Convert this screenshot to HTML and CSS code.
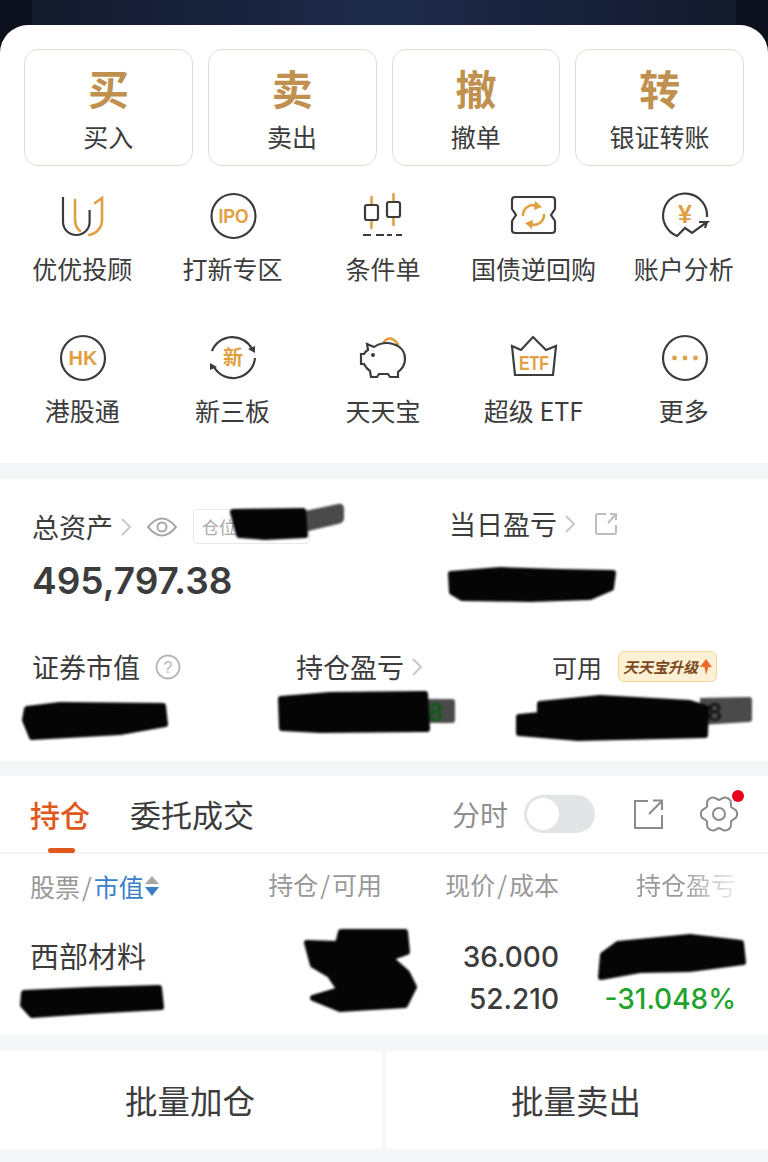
FILE: index.html

```html
<html>
<head>
  <title>交易</title>
  <link rel="stylesheet" href="styles.css">
</head>
<body>
  <div class="page">
    <div class="top-bg"><div class="top-panel"></div></div>

    <div class="sheet">
      <div class="actions">
        <div class="action"><span class="action-big">买</span><span class="action-label">买入</span></div>
        <div class="action"><span class="action-big">卖</span><span class="action-label">卖出</span></div>
        <div class="action"><span class="action-big">撤</span><span class="action-label">撤单</span></div>
        <div class="action"><span class="action-big">转</span><span class="action-label">银证转账</span></div>
      </div>

      <div class="menu">
        <div class="menu-item">
          <svg class="icon" viewBox="0 0 48 48">
            <path class="dark" d="M5 5V30a13.3 13 0 0 0 26.6 0V18"/>
            <path class="gold" d="M17 8V27q0 8 5 12"/>
            <path class="gold" d="M37 11L44 6V28a15 15 0 0 1-13 15"/>
          </svg>
          <span>优优投顾</span>
        </div>
        <div class="menu-item">
          <svg class="icon" viewBox="0 0 48 48">
            <circle class="dark" cx="24.5" cy="24" r="22"/>
            <text class="icon-text" x="24.5" y="31" font-size="20" textLength="30" lengthAdjust="spacingAndGlyphs">IPO</text>
          </svg>
          <span>打新专区</span>
        </div>
        <div class="menu-item">
          <svg class="icon" viewBox="0 0 48 48">
            <path class="gold" d="M12.5 5V13M12.5 28V36M34.5 2V10M34.5 25V33"/>
            <rect class="dark" x="6" y="13" width="13" height="15" rx="2"/>
            <rect class="dark" x="28" y="10" width="13" height="15" rx="2"/>
            <path class="dark" d="M4 43H12M17 43H25M28 43H33M37 43H43"/>
          </svg>
          <span>条件单</span>
        </div>
        <div class="menu-item">
          <svg class="icon" viewBox="0 0 48 48">
            <path class="dark" d="M6 5H43a3 3 0 0 1 3 3v9l-4 6 4 6v9a3 3 0 0 1-3 3H6a3 3 0 0 1-3-3v-9l4-6-4-6V8a3 3 0 0 1 3-3z"/>
            <path class="gold" d="M14 23a10 10 0 0 1 14-9M35 23a10 10 0 0 1-14 9"/>
            <path class="gold-fill" d="M26 9l7 6-8 3zM23 37l-7-6 8-3z"/>
          </svg>
          <span>国债逆回购</span>
        </div>
        <div class="menu-item">
          <svg class="icon" viewBox="0 0 48 48">
            <path class="dark" d="M47 25A22 22 0 1 0 17 44L25 36L32 41L47 30H39M47 30L45 36"/>
            <text class="icon-text" x="25" y="31" font-size="25">¥</text>
          </svg>
          <span>账户分析</span>
        </div>

        <div class="menu-item">
          <svg class="icon" viewBox="0 0 48 48">
            <circle class="dark" cx="25" cy="24" r="22"/>
            <text class="icon-text" x="25" y="31" font-size="20">HK</text>
          </svg>
          <span>港股通</span>
        </div>
        <div class="menu-item">
          <svg class="icon" viewBox="0 0 48 48">
            <path class="dark" d="M3 17A22 22 0 0 1 43 15M46 24A22 22 0 0 1 5 33"/>
            <path class="dark-fill" d="M39 15l7-3 0 7zM8 33l-7 3 0-7z"/>
            <text class="icon-text" x="24" y="31" font-size="20">新</text>
          </svg>
          <span>新三板</span>
        </div>
        <div class="menu-item">
          <svg class="icon" viewBox="0 0 48 48">
            <path class="gold" d="M25 8Q31 0 39 10"/>
            <path class="dark" d="M8 10L15 13C20 9 28 8 34 10C42 12 46 18 46 25C46 31 43 35 39 38V43H31L29 40H20L18 43H12L11 37C8 35 6 32 5 30H2V20H5C6 18 7 17 9 16Z"/>
            <circle class="dark-fill" cx="14" cy="21" r="2"/>
          </svg>
          <span>天天宝</span>
        </div>
        <div class="menu-item">
          <svg class="icon" viewBox="0 0 48 48">
            <path class="dark" d="M3 12L12 16L24 3L37 16L47 12L44 41H6Z"/>
            <text class="icon-text" x="25" y="36" font-size="20" textLength="30" lengthAdjust="spacingAndGlyphs">ETF</text>
          </svg>
          <span>超级 ETF</span>
        </div>
        <div class="menu-item">
          <svg class="icon" viewBox="0 0 48 48">
            <circle class="dark" cx="25" cy="24" r="22"/>
            <circle class="gold-fill" cx="14.500" cy="24" r="2.4"/>
            <circle class="gold-fill" cx="25" cy="24" r="2.4"/>
            <circle class="gold-fill" cx="35.500" cy="24" r="2.4"/>
          </svg>
          <span>更多</span>
        </div>
      </div>
    </div>

    <div class="assets">
      <div class="assets-top">
        <div class="asset-total">
          <div class="label">
            <span>总资产</span>
            <svg class="chevron" viewBox="0 0 12 20"><path d="M2 2L10 10L2 18"/></svg>
            <svg class="eye" viewBox="0 0 30 20"><path d="M1 10Q15 -7 29 10Q15 27 1 10Z"/><circle cx="15" cy="10" r="4.5"/></svg>
            <span class="position-tag">仓位</span>
          </div>
          <div class="total-value">495,797.38</div>
        </div>
        <div class="asset-today">
          <div class="label">
            <span>当日盈亏</span>
            <svg class="chevron" viewBox="0 0 12 20"><path d="M2 2L10 10L2 18"/></svg>
            <svg class="share-small" viewBox="0 0 24 24"><path d="M12 2H4a2 2 0 0 0-2 2V20a2 2 0 0 0 2 2H20a2 2 0 0 0 2-2V13M14 11L22 2M16 2H22V8"/></svg>
          </div>
        </div>
      </div>
      <div class="assets-bottom">
        <div class="label label-market">
          <span>证券市值</span>
          <svg class="help" viewBox="0 0 26 26"><circle cx="13" cy="13" r="11.5"/><text x="13" y="19" font-size="16">?</text></svg>
        </div>
        <div class="label label-hold">
          <span>持仓盈亏</span>
          <svg class="chevron" viewBox="0 0 12 20"><path d="M2 2L10 10L2 18"/></svg>
        </div>
        <div class="label label-free">
          <span>可用</span>
          <span class="upgrade">天天宝升级<svg class="upgrade-arrow" viewBox="0 0 12 16"><path d="M6 0L12 8H8.500L6 16L4.500 8H0Z"/></svg></span>
        </div>
      </div>
    </div>

    <div class="holdings">
      <div class="tabs">
        <span class="tab tab-active">持仓</span>
        <span class="tab">委托成交</span>
        <div class="tab-tools">
          <span class="tool-label">分时</span>
          <span class="switch"><span class="knob"></span></span>
          <svg class="share" viewBox="0 0 30 30"><path d="M15 2H2V29H29V16M16 15L29 2M20 1.500H29V11"/></svg>
          <span class="gear-box">
            <svg class="gear" viewBox="-1 0 38 36">
              <path d="M30.100 11L35.100 14.400Q37 18 35.100 21.600L30.100 25L29.700 31Q27.500 34.500 23.400 34.600L18 32L12.600 34.600Q8.500 34.500 6.300 31L5.900 25L.9 21.600Q-1 18 .9 14.400L5.900 11L6.300 5Q8.500 1.500 12.600 1.400L18 4L23.400 1.400Q27.500 1.500 29.700 5Z"/>
              <circle cx="18" cy="18" r="6"/>
            </svg>
            <span class="red-dot"></span>
          </span>
        </div>
      </div>

      <div class="table-head">
        <div class="head-name">股票<span class="slash">/</span><span class="blue">市值</span><svg class="sort" viewBox="0 0 14 20"><path class="sort-up" d="M7 0L14 8H0Z"/><path class="sort-down" d="M0 11H14L7 20Z"/></svg></div>
        <div>持仓<span class="slash">/</span>可用</div>
        <div>现价<span class="slash">/</span>成本</div>
        <div class="fade">持仓盈亏</div>
      </div>

      <div class="table-row">
        <div class="stock-name">西部材料</div>
        <div></div>
        <div class="num">36.000</div>
        <div></div>
        <div></div>
        <div></div>
        <div class="num">52.210</div>
        <div class="num green">-31.048%</div>
      </div>
    </div>

    <div class="batch">
      <div class="batch-btn">批量加仓</div>
      <div class="batch-btn">批量卖出</div>
    </div>

    <!-- scribbled out parts of the screenshot -->
    <svg class="scribbles" viewBox="0 0 768 1162">
      <path class="tail" d="M300 512L338 504Q344 503 344 509V518Q344 523 338 524L300 533Z"/>
      <path class="tail" d="M425 699H452Q455 699 455 702V720Q455 723 452 723H425Z"/>
      <path class="tail" d="M700 698L749 697Q752 697 752 700V719Q752 722 749 722L700 725Z"/>
      <text class="hint hint-green" x="428" y="721" font-size="24">8</text>
      <text class="hint" x="707" y="721" font-size="24">8</text>
      <path d="M233 512L303 511L305 535L265 537L239 535Z"/>
      <path d="M451 574L500 570L560 572L613 573L611 588L590 597L530 599L462 598L452 592Z"/>
      <path d="M27 709L60 705L163 706L165 724L120 732L32 737L25 720Z"/>
      <path d="M281 699L330 695L425 694L427 729L320 730L282 728Z"/>
      <path d="M540 704L600 698L690 703L706 708L705 735L578 738L519 733L519 717L540 715Z"/>
      <path d="M24 993L90 990L159 988L161 1007L90 1011L32 1015L23 1005Z"/>
      <path d="M307 943L338 944L341 932L405 932L407 952L390 958L407 973L414 987L405 1005L340 1009L313 998L340 990L330 975L313 965Z"/>
      <path d="M603 955L618 944L690 937L741 943L743 962L690 969L640 970L601 977Z"/>
    </svg>
  </div>
</body>
</html>
```

FILE: styles.css

```css
body {
  margin: 0;
  background-color: #f4f6f8;
  font-family: "Noto Sans CJK SC", "Noto Sans", sans-serif;
  color: #3c3c3c;
}

svg {
  display: block;
  fill: none;
}

.page {
  position: relative;
  width: 768px;
  height: 1162px;
  overflow: hidden;
}

.top-bg {
  height: 53px;
  padding: 0 32px;
  background: #0c111d;
}

.top-panel {
  height: 100%;
  background: linear-gradient(90deg, #121a2b, #1e2a4b 50%, #121a2b);
}

.sheet {
  position: relative;
  margin-top: -28px;
  padding: 24px 0 38px;
  background-color: #fff;
  border-radius: 28px 28px 0 0;
}

.actions {
  display: flex;
  gap: 15px;
  padding: 0 24px;
}

.action {
  flex: 1;
  height: 117px;
  box-sizing: border-box;
  display: flex;
  flex-direction: column;
  align-items: center;
  border: 1px solid #e5dcd6;
  border-radius: 14px;
}

.action-big {
  margin-top: 8px;
  font-size: 41px;
  line-height: 58px;
  font-weight: 700;
  color: #c0904f;
}

.action-label {
  margin-top: 2px;
  font-size: 25px;
  line-height: 36px;
}

.menu {
  display: grid;
  grid-template-columns: repeat(5, 1fr);
  row-gap: 51px;
  margin-top: 26px;
  padding: 0 9px 0 7px;
}

.menu-item {
  display: flex;
  flex-direction: column;
  align-items: center;
  font-size: 25px;
  line-height: 30px;
}

.icon {
  width: 48px;
  height: 48px;
  margin-bottom: 13px;
  overflow: visible;
}

.dark {
  fill: none;
  stroke: #3c3c3c;
  stroke-width: 2.2;
}

.gold {
  fill: none;
  stroke: #e2a043;
  stroke-width: 2.6;
  stroke-linecap: round;
}

.gold-fill {
  fill: #e2a043;
}

.dark-fill {
  fill: #3c3c3c;
}

.icon-text {
  fill: #e2a043;
  font-family: "Liberation Sans", "Noto Sans CJK SC", sans-serif;
  font-weight: 700;
  text-anchor: middle;
}

.assets {
  height: 282px;
  margin-top: 16px;
  box-sizing: border-box;
  padding: 30px 0 0 32px;
  background-color: #fff;
}

.assets-top {
  display: grid;
  grid-template-columns: 417px 1fr;
}

.label {
  display: flex;
  align-items: center;
  font-size: 27px;
  line-height: 30px;
}

.chevron {
  width: 12px;
  height: 20px;
  margin-left: 7px;
  stroke: #c9c9c9;
  stroke-width: 2;
}

.eye {
  width: 30px;
  height: 20px;
  margin-left: 15px;
  stroke: #a8a8a8;
  stroke-width: 2;
}

.position-tag {
  margin-left: 16px;
  width: 117px;
  height: 35px;
  box-sizing: border-box;
  padding-left: 8px;
  border: 1px solid #e8e8e8;
  border-radius: 4px;
  font-size: 17px;
  line-height: 33px;
  color: #aaa;
}

.share-small {
  width: 24px;
  height: 24px;
  margin-left: 18px;
  stroke: #bdbdbd;
  stroke-width: 2;
}

.total-value {
  margin-top: 15px;
  font-family: Inter, "Liberation Sans", sans-serif;
  font-size: 37px;
  line-height: 44px;
  font-weight: 600;
}

.assets-bottom {
  display: grid;
  grid-template-columns: 264px 256px 1fr;
  margin-top: 48px;
}

.label-free {
  font-size: 25px;
}

.help {
  width: 26px;
  height: 26px;
  margin-left: 15px;
  stroke: #b5b5b5;
  stroke-width: 1.8;
}

.help text {
  fill: #b5b5b5;
  stroke: none;
  font-family: "Liberation Sans", sans-serif;
  text-anchor: middle;
}

.upgrade {
  display: flex;
  align-items: center;
  gap: 2px;
  margin-left: 16px;
  height: 31px;
  box-sizing: border-box;
  padding: 0 4px;
  background-color: #fdf0d5;
  border: 1px solid #f3d79a;
  border-radius: 6px;
  font-size: 15px;
  line-height: 29px;
  font-weight: 700;
  font-style: italic;
  color: #7a4a20;
}

.upgrade-arrow {
  width: 12px;
  height: 16px;
  fill: #ec6a2a;
}

.holdings {
  height: 259px;
  margin-top: 15px;
  background-color: #fff;
}

.tabs {
  display: flex;
  align-items: center;
  height: 78px;
  box-sizing: border-box;
  padding: 0 30px;
  border-bottom: 2px solid #f5f5f5;
}

.tab {
  position: relative;
  margin-right: 40px;
  font-size: 31px;
  line-height: 78px;
}

.tab-active {
  font-size: 30px;
  color: #e0591c;
  font-weight: 500;
}

.tab-active::after {
  content: "";
  position: absolute;
  left: 18px;
  bottom: 0;
  width: 27px;
  height: 5px;
  border-radius: 3px;
  background-color: #e0591c;
}

.tab-tools {
  display: flex;
  align-items: center;
  margin-left: auto;
}

.tool-label {
  font-size: 28px;
  color: #8f8f8f;
}

.switch {
  display: block;
  width: 71px;
  height: 38px;
  margin-left: 16px;
  padding: 3px;
  box-sizing: border-box;
  border-radius: 19px;
  background-color: #e2e4e6;
}

.knob {
  display: block;
  width: 32px;
  height: 32px;
  border-radius: 50%;
  background-color: #fff;
}

.share {
  width: 30px;
  height: 30px;
  margin-left: 38px;
  stroke: #8a8a8a;
  stroke-width: 2;
}

.gear-box {
  position: relative;
  margin-left: 37px;
}

.gear {
  width: 38px;
  height: 36px;
  stroke: #8a8a8a;
  stroke-width: 2;
  stroke-linejoin: round;
}

.red-dot {
  position: absolute;
  top: -6px;
  right: -6px;
  width: 12px;
  height: 12px;
  border-radius: 50%;
  background-color: #e8001c;
}

.table-head,
.table-row {
  display: grid;
  grid-template-columns: 175px 177px 177px 177px;
  padding-left: 30px;
  text-align: right;
}

.table-head {
  height: 63px;
  font-size: 25px;
  line-height: 60px;
  color: #999;
}

.slash {
  margin: 0 2px;
}

.head-name {
  display: flex;
  align-items: center;
  text-align: left;
}

.blue {
  color: #3a7fc8;
}

.sort {
  width: 14px;
  height: 20px;
  margin-left: 1px;
}

.sort-up {
  fill: #a8a8a8;
}

.sort-down {
  fill: #3a7fc8;
}

.fade {
  background: linear-gradient(90deg, #999 70%, #e4e4e4 96%);
  background-clip: text;
  -webkit-background-clip: text;
  color: transparent;
}

.table-row {
  margin-top: 19px;
  font-size: 29px;
  line-height: 42px;
}

.stock-name {
  margin-top: -2px;
  text-align: left;
}

.num {
  font-family: Inter, "Liberation Sans", sans-serif;
  font-size: 28px;
  font-weight: 500;
}

.green {
  color: #1fa32c;
}

.batch {
  display: flex;
  gap: 4px;
  margin-top: 16px;
}

.batch-btn {
  flex: 1;
  height: 98px;
  padding-right: 2px;
  box-sizing: border-box;
  font-size: 32.5px;
  line-height: 98px;
  text-align: center;
  background-color: #fff;
}

/* redaction strokes on top of the page */
.scribbles {
  position: absolute;
  top: 0;
  left: 0;
  width: 768px;
  height: 1162px;
  fill: #050505;
  stroke: #050505;
  stroke-width: 6;
  stroke-linejoin: round;
  filter: blur(1.2px);
  pointer-events: none;
}

.scribbles .tail {
  fill: #4a4a4a;
  stroke: none;
}

.hint {
  fill: #151515;
  stroke: none;
  font-family: Inter, "Liberation Sans", sans-serif;
  font-weight: 600;
}

.scribbles .hint-green {
  fill: #0c5c16;
}
```
